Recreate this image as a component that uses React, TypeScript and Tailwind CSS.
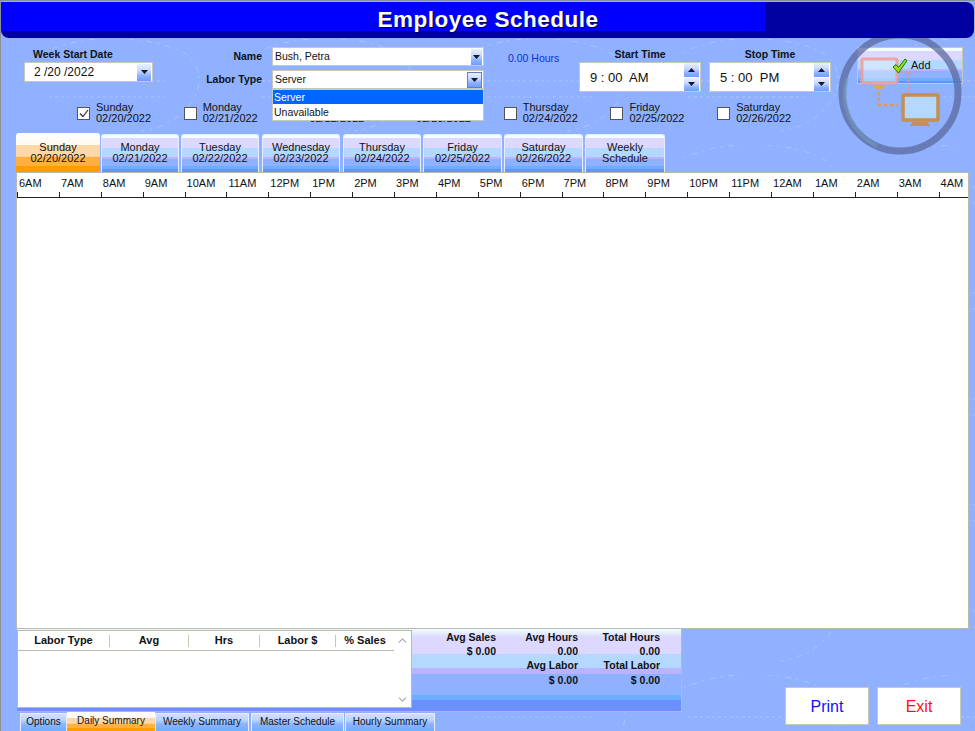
import { ChevronDown, ChevronUp } from 'lucide-react';

const bands =
  'bg-[linear-gradient(to_bottom,#f0ffff_0%,#dcd8ff_10%,#dcd8ff_30%,#b4d8ff_30%,#b4d8ff_48%,#b8b4ff_48%,#b8b4ff_55%,#8fb1ff_55%,#8fb1ff_80%,#6bb0ff_80%,#6bb0ff_87%,#6b8fff_87%)]';
const tabBands =
  'bg-[linear-gradient(to_bottom,#f4ffff_0%,#f4ffff_8%,#dcd8ff_8%,#dcd8ff_35%,#b4d8ff_35%,#b4d8ff_60%,#b8b4ff_60%,#b8b4ff_66%,#8fb1ff_66%,#8fb1ff_85%,#6bb0ff_85%,#6bb0ff_93%,#6b8fff_93%)]';
const activeBands =
  'bg-[linear-gradient(to_bottom,#ffffff_0%,#fffaf0_30%,#ffd8a8_31%,#ffd8a8_60%,#ffb040_62%,#ffb040_84%,#ff9c00_84%)]';
const spinBands =
  'bg-[linear-gradient(to_bottom,#e8f0ff_0%,#c8d8ff_40%,#8fb1ff_70%,#6b9fff_100%)]';

const days = [
  { name: 'Sunday', date: '02/20/2022', checked: true },
  { name: 'Monday', date: '02/21/2022' },
  { name: 'Tuesday', date: '02/22/2022' },
  { name: 'Wednesday', date: '02/23/2022' },
  { name: 'Thursday', date: '02/24/2022' },
  { name: 'Friday', date: '02/25/2022' },
  { name: 'Saturday', date: '02/26/2022' },
];

const tabs = [
  { top: 'Monday', bottom: '02/21/2022', cls: 'w-[78px] ml-px' },
  { top: 'Tuesday', bottom: '02/22/2022', cls: 'w-[78px] ml-[2px]' },
  { top: 'Wednesday', bottom: '02/23/2022', cls: 'w-[78px] ml-[3px]' },
  { top: 'Thursday', bottom: '02/24/2022', cls: 'w-[78px] ml-[3px]' },
  { top: 'Friday', bottom: '02/25/2022', cls: 'w-[79px] ml-[2px]' },
  { top: 'Saturday', bottom: '02/26/2022', cls: 'w-[79px] ml-[2px]' },
  { top: 'Weekly', bottom: 'Schedule', cls: 'w-[80px] ml-[2px]' },
];

const hours = [
  '6AM', '7AM', '8AM', '9AM', '10AM', '11AM', '12PM', '1PM', '2PM', '3PM', '4PM', '5PM',
  '6PM', '7PM', '8PM', '9PM', '10PM', '11PM', '12AM', '1AM', '2AM', '3AM', '4AM',
];

const columns = [
  { label: 'Labor Type', cls: 'w-[92px]' },
  { label: 'Avg', cls: 'w-[79px]' },
  { label: 'Hrs', cls: 'w-[71px]' },
  { label: 'Labor $', cls: 'w-[76px]' },
  { label: '% Sales', cls: 'w-[58px]' },
];

const summary = [
  ['Avg Sales', 'Avg Hours', 'Total Hours'],
  ['$ 0.00', '0.00', '0.00'],
  ['', 'Avg Labor', 'Total Labor'],
  ['', '$ 0.00', '$ 0.00'],
];

function Arrow({ up = false }: { up?: boolean }) {
  return (
    <svg width="7" height="4" viewBox="0 0 7 4" className="block">
      <polygon points={up ? '3.5,0 7,4 0,4' : '0,0 7,0 3.5,4'} fill="#111827" />
    </svg>
  );
}

function Watermark() {
  return (
    <svg className="absolute inset-0 h-full w-full" aria-hidden="true">
      <defs>
        <pattern id="wm" x="40" y="38" width="213" height="106" patternUnits="userSpaceOnUse">
          <g fill="none" stroke="#c4d4ff" strokeWidth="1" strokeDasharray="6 5 2 6">
            <path d="M-20 30 C10 -5 100 -10 145 15 C175 40 150 85 100 92" />
            <path d="M-10 90 C-35 70 -30 45 -15 35" />
            <path d="M8 42 L128 42 M8 58 L128 58" strokeDasharray="3 3" />
          </g>
        </pattern>
      </defs>
      <rect x="0" y="38" width="975" height="693" fill="url(#wm)" opacity="0.55" />
    </svg>
  );
}

function Logo() {
  return (
    <svg
      className="pointer-events-none absolute left-[834px] top-[37px]"
      width="130"
      height="122"
      viewBox="0 8 130 122"
      aria-hidden="true"
    >
      <circle cx="65" cy="63" r="58" fill="none" stroke="#5c6a9e" strokeOpacity="0.75" strokeWidth="7" />
      <path d="M12 48 A58 58 0 0 0 42 116" fill="none" stroke="#6f9db4" strokeOpacity="0.55" strokeWidth="4" />
      <path d="M62 42 H80 M74 42 V66" stroke="#ef8f8f" strokeWidth="1.5" strokeDasharray="2 2" fill="none" />
      <path d="M44 56 V75 H62" stroke="#d99a4e" strokeWidth="2.5" strokeDasharray="3 3" fill="none" />
      <rect x="27" y="29" width="35" height="24" fill="#e8f8ff" fillOpacity="0.45" stroke="#f29c94" strokeOpacity="0.85" strokeWidth="3" rx="1" />
      <path d="M38 55 H50 L48 59 H40 Z" fill="#e0a35c" />
      <rect x="68" y="65" width="35" height="25" fill="#b4d8ff" stroke="#c68f4d" strokeWidth="3.5" rx="1" />
      <path d="M78 92 H92 L95 96 H75 Z" fill="#c68f4d" />
    </svg>
  );
}

export default function App() {
  return (
    <div className="relative h-[731px] w-[975px] overflow-hidden border-l border-t border-[#8a8f99] bg-[#8fb1ff] font-['Liberation_Sans',sans-serif] text-[11px] leading-[11px] text-[#111]">
      <Watermark />

      <div className="relative">
        {/* title bar */}
        <div className="mt-px flex h-[36px] w-[973px] flex-col overflow-hidden rounded-b-[8px] rounded-tr-[8px] bg-[#0000a0]">
          <div className="flex h-[29px] w-[764px] items-center justify-center bg-[#0000ff] pl-[210px] pt-[6px]">
            <h1 className="text-[22.5px] font-bold tracking-[0.5px] whitespace-nowrap text-white [text-shadow:1px_1px_0_#000050]">
              Employee Schedule
            </h1>
          </div>
        </div>

        {/* form */}
        <div className="flex h-[59px] items-start">
          <div className="ml-[23px] mt-[11px] w-[129px]">
            <div className="pl-[9px] text-[10.5px] font-bold">Week Start Date</div>
            <div className="mt-[2px] flex h-[20px] items-center justify-between border border-[#c9c7b8] bg-white pl-[9px] pr-px text-[12px]">
              <span>2 /20 /2022</span>
              <span className={`flex h-[17px] w-[14px] items-center justify-center ${spinBands}`}>
                <Arrow />
              </span>
            </div>
          </div>

          <div className="relative ml-[15px] mt-[9px] w-[331px]">
            <div className="flex h-[19px] items-center">
              <span className="w-[94px] text-right text-[10.5px] font-bold">Name</span>
              <div className="ml-[10px] flex h-[19px] w-[212px] items-center justify-between border border-[#c9c7b8] bg-white pl-[2px] pr-px text-[10.5px]">
                <span>Bush, Petra</span>
                <span className={`flex h-[16px] w-[11px] items-center justify-center ${spinBands}`}>
                  <Arrow />
                </span>
              </div>
            </div>
            <div className="mt-[4px] flex h-[19px] items-center">
              <span className="w-[94px] text-right text-[10.5px] font-bold">Labor Type</span>
              <div className="ml-[10px] flex h-[19px] w-[212px] items-center justify-between border border-[#c9c7b8] bg-white pl-[2px] pr-px text-[10.5px]">
                <span>Server</span>
                <span className={`flex h-[16px] w-[15px] items-center justify-center border border-[#6b7bd0] ${spinBands}`}>
                  <Arrow />
                </span>
              </div>
            </div>
            <div className="absolute left-[104px] top-[42px] z-10 w-[212px] border border-[#c9c7b8] bg-white text-[10.5px]">
              <div className="flex h-[14px] items-center bg-[#0066ff] pl-[1px] text-white">Server</div>
              <div className="flex h-[16px] items-center pl-[1px]">Unavailable</div>
            </div>
          </div>

          <div className="ml-[9px] mt-[15px] w-[71px] text-[10.5px] text-[#1030e0]">0.00 Hours</div>

          <TimeBox label="Start Time" time="9 : 00  AM" />
          <div className="ml-[8px]">
            <TimeBox label="Stop Time" time="5 : 00  PM" />
          </div>

          <button
            type="button"
            className={`ml-[26px] mt-[9px] flex h-[37px] w-[106px] items-center justify-start border border-[#c9c7b8] pl-[34px] ${tabBands}`}
          >
            <svg width="16" height="16" viewBox="0 0 16 16" className="relative z-10 mr-[3px] shrink-0">
              <path d="M1 9 L4 6.5 L6.5 9.5 L13 1 L15 2.5 L6.5 15 Z" fill="#9be000" stroke="#0b7a1c" strokeWidth="1" />
            </svg>
            <span className="relative z-10">Add</span>
          </button>
        </div>

        {/* day checkboxes */}
        <div className="flex h-[36px] items-start pl-[76px] pt-[5px]">
          {days.map((d) => (
            <div key={d.name} className="flex h-[22px] w-[106.7px] items-center">
              <span className="mt-px flex h-[13px] w-[13px] shrink-0 items-center justify-center border border-[#555] bg-white">
                {d.checked && (
                  <svg width="10" height="9" viewBox="0 0 10 9">
                    <path d="M1 4.5 L4 7.5 L9 1" fill="none" stroke="#333" strokeWidth="1.2" />
                  </svg>
                )}
              </span>
              <div className="ml-[6px] whitespace-nowrap">
                <div>{d.name}</div>
                <div>{d.date}</div>
              </div>
            </div>
          ))}
        </div>

        {/* day tabs */}
        <div className="flex h-[39px] items-end pl-[15px]">
          <div className={`flex h-[39px] w-[84px] flex-col items-center justify-center rounded-t-[3px] text-center ${activeBands}`}>
            <div>Sunday</div>
            <div>02/20/2022</div>
          </div>
          {tabs.map((t) => (
            <div
              key={t.top}
              className={`flex h-[38px] flex-col items-center justify-center rounded-t-[3px] border-x border-t border-[#e8ecff] pb-[1px] text-center ${tabBands} ${t.cls}`}
            >
              <div>{t.top}</div>
              <div>{t.bottom}</div>
            </div>
          ))}
        </div>

        {/* timeline */}
        <div className="ml-[15px] h-[457px] w-[953px] overflow-hidden border border-[#b9b9ae] bg-white">
          <div className="flex h-[25px] border-b border-[#222]">
            {hours.map((h) => (
              <div key={h} className="relative w-[41.9px] shrink-0 pl-[2px] pt-[5px] whitespace-nowrap">
                {h}
                <span className="absolute bottom-0 left-0 h-[5px] w-px bg-[#222]" />
              </div>
            ))}
          </div>
        </div>

        {/* bottom */}
        <div className="flex">
          <div className="ml-[16px] w-[665px]">
            <div className={`flex h-[83px] items-start border-r border-b border-[#b9b9ae] ${bands}`}>
              <div className="mt-px h-[78px] w-[395px] shrink-0 border border-[#b9b9ae] bg-white">
                <div className="flex h-full">
                  <div className="h-[20px] w-[376px] border-b border-[#b9b9ae]">
                    <div className="flex h-[19px] items-center">
                      {columns.map((c, i) => (
                        <div
                          key={c.label}
                          className={`flex h-[12px] items-center justify-center font-bold ${i < 4 ? 'border-r border-[#c9c7b8]' : ''} ${c.cls}`}
                        >
                          {c.label}
                        </div>
                      ))}
                    </div>
                  </div>
                  <div className="flex flex-1 flex-col items-center justify-between pb-px pt-[3px] text-[#a8a8a8]">
                    <ChevronUp size={13} strokeWidth={2} />
                    <ChevronDown size={13} strokeWidth={2} />
                  </div>
                </div>
              </div>
              <div className="w-[248px] pt-[1px]">
                {summary.map((row, r) => (
                  <div key={r} className="grid h-[14.4px] grid-cols-[84px_82px_82px] items-center text-right text-[10.5px] font-bold">
                    {row.map((cell, i) => (
                      <span key={i} className="whitespace-nowrap">{cell}</span>
                    ))}
                  </div>
                ))}
              </div>
            </div>
            <div className="flex h-[19px] items-end pl-[3px] text-[10px]">
              <PageTab label="Options" cls="w-[47px]" />
              <div className={`flex h-[19px] w-[88px] items-center justify-center pb-[2px] ${activeBands}`}>Daily Summary</div>
              <PageTab label="Weekly Summary" cls="w-[94px]" />
              <PageTab label="Master Schedule" cls="ml-[2px] w-[93px]" />
              <PageTab label="Hourly Summary" cls="ml-px w-[90px]" />
            </div>
          </div>

          <div className="ml-[103px] mt-[58px] flex h-[38px] gap-[8px] text-[16px]">
            <button type="button" className="h-[38px] w-[84px] border border-[#c9c7b8] bg-white text-[#1010ff]">Print</button>
            <button type="button" className="h-[38px] w-[84px] border border-[#c9c7b8] bg-white text-[#ff1010]">Exit</button>
          </div>
        </div>
      </div>

      <Logo />
    </div>
  );
}

function TimeBox({ label, time }: { label: string; time: string }) {
  return (
    <div className="mt-[11px] w-[122px]">
      <div className="text-center text-[10.5px] font-bold">{label}</div>
      <div className="mt-[2px] flex h-[30px] items-center justify-between border border-[#c9c7b8] bg-white pl-[10px] pr-px text-[13px]">
        <span className="whitespace-pre">{time}</span>
        <span className="flex h-[28px] w-[15px] flex-col gap-px">
          <span className={`flex flex-1 items-center justify-center ${spinBands}`}>
            <Arrow up />
          </span>
          <span className={`flex flex-1 items-center justify-center ${spinBands}`}>
            <Arrow />
          </span>
        </span>
      </div>
    </div>
  );
}

function PageTab({ label, cls }: { label: string; cls: string }) {
  return (
    <div
      className={`flex h-[18px] items-center justify-center whitespace-nowrap border border-[#e8ecff] border-b-0 pb-[2px] bg-[linear-gradient(to_bottom,#dcd8ff_0%,#b4d8ff_35%,#8fb1ff_60%,#6bb0ff_100%)] ${cls}`}
    >
      {label}
    </div>
  );
}
